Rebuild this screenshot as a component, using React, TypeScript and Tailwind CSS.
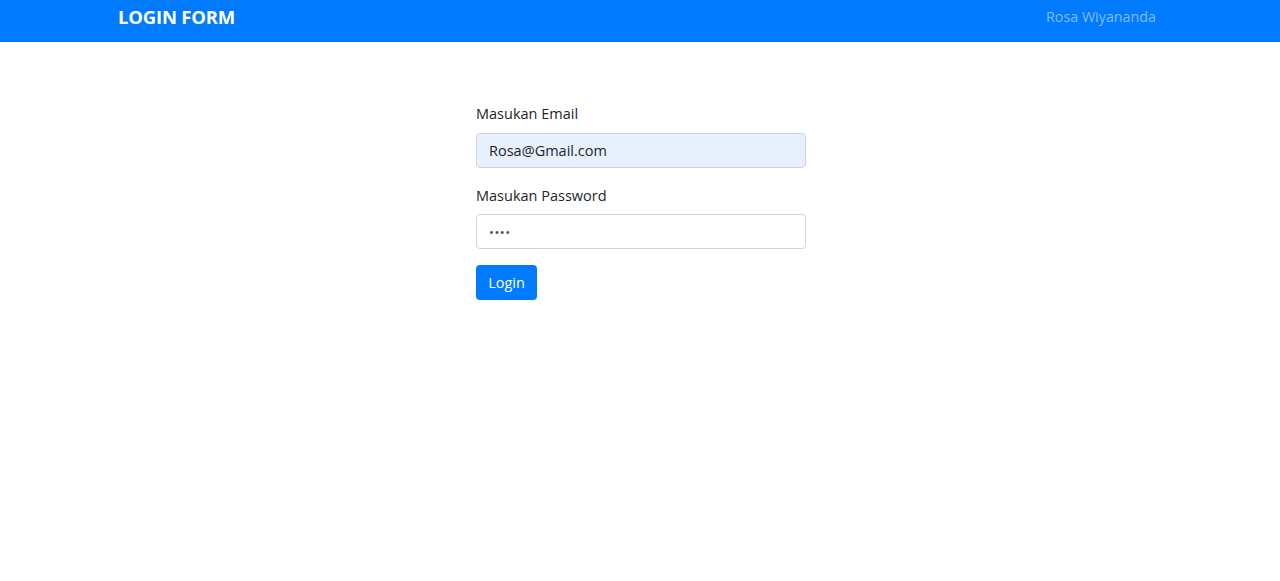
export default function App() {
  const font = { fontFamily: '"Open Sans", "Noto Sans", "Liberation Sans", sans-serif' };
  return (
    <div className="min-h-screen bg-white" style={font}>
      <nav className="h-[42px] bg-[#007bff] flex items-start justify-between pl-[118px] pr-[124px] pt-[4px]">
        <span className="text-[18.5px] leading-[26px] font-bold text-white tracking-[-0.2px]">LOGIN FORM</span>
        <span className="text-[14.3px] leading-[26px] text-[#80bdff]">Rosa Wiyananda</span>
      </nav>

      <div className="flex justify-center pl-[2px] pt-[61px]">
        <form className="w-[330px] flex flex-col" onSubmit={(e) => e.preventDefault()}>
          <label className="text-[14.5px] leading-[22px] text-[#212529] mb-[8px]">Masukan Email</label>
          <input
            type="email"
            defaultValue="Rosa@Gmail.com"
            className="h-[35px] rounded-[4px] border border-[#ced4da] bg-[#e8f0fe] px-[12px] text-[14.5px] text-[#212529] outline-none"
          />
          <label className="mt-[17px] text-[14.5px] leading-[22px] text-[#212529] mb-[7px]">Masukan Password</label>
          <input
            type="password"
            defaultValue="1234"
            className="h-[35px] rounded-[4px] border border-[#ced4da] bg-white px-[12px] text-[13px] tracking-[0.5px] text-[#495057] outline-none"
          />
          <div className="mt-[16px]">
            <button
              type="submit"
              className="h-[35px] w-[61px] rounded-[4px] bg-[#007bff] text-[14.5px] text-white"
            >
              Login
            </button>
          </div>
        </form>
      </div>
    </div>
  );
}
